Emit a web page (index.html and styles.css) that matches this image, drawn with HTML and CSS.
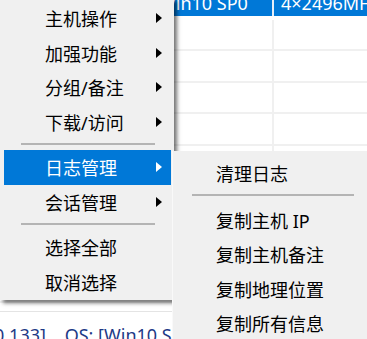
FILE: index.html
```html
<!DOCTYPE html>
<html>

<head>
  <title>Host list - context menu</title>
  <link rel="stylesheet" href="styles.css">
</head>

<body>
  <div class="screen">
    <div class="list">
      <div class="row selected">
        <span class="cell c1"></span>
        <span class="cell c2">Win10 SP0</span>
        <span class="cell c3">4×2496MHz</span>
      </div>
      <div class="rows">
        <div class="row"><span class="cell c1"></span><span class="cell c2"></span><span class="cell c3"></span></div>
        <div class="row"><span class="cell c1"></span><span class="cell c2"></span><span class="cell c3"></span></div>
        <div class="row"><span class="cell c1"></span><span class="cell c2"></span><span class="cell c3"></span></div>
        <div class="row"><span class="cell c1"></span><span class="cell c2"></span><span class="cell c3"></span></div>
        <div class="row"><span class="cell c1"></span><span class="cell c2"></span><span class="cell c3"></span></div>
        <div class="row"><span class="cell c1"></span><span class="cell c2"></span><span class="cell c3"></span></div>
        <div class="row"><span class="cell c1"></span><span class="cell c2"></span><span class="cell c3"></span></div>
        <div class="row"><span class="cell c1"></span><span class="cell c2"></span><span class="cell c3"></span></div>
        <div class="row"><span class="cell c1"></span><span class="cell c2"></span><span class="cell c3"></span></div>
      </div>
    </div>
    <div class="status">
      <span class="status-text">0.133]    OS: [Win10 SP0]    CPU: 4×2496MHz</span>
    </div>

    <div class="menu main-menu">
      <div class="item"><span>主机操作</span><i class="arrow"></i></div>
      <div class="item"><span>加强功能</span><i class="arrow"></i></div>
      <div class="item"><span>分组/备注</span><i class="arrow"></i></div>
      <div class="item"><span>下载/访问</span><i class="arrow"></i></div>
      <div class="sep"></div>
      <div class="item active"><span>日志管理</span><i class="arrow"></i></div>
      <div class="item"><span>会话管理</span><i class="arrow"></i></div>
      <div class="sep"></div>
      <div class="item"><span>选择全部</span></div>
      <div class="item"><span>取消选择</span></div>
    </div>

    <div class="menu sub-menu">
      <div class="item"><span>清理日志</span></div>
      <div class="sep"></div>
      <div class="item"><span>复制主机 IP</span></div>
      <div class="item"><span>复制主机备注</span></div>
      <div class="item"><span>复制地理位置</span></div>
      <div class="item"><span>复制所有信息</span></div>
    </div>
  </div>
</body>

</html>
```

FILE: styles.css
```css
html,
body {
  margin: 0;
  padding: 0;
  background: #fff;
}

.screen {
  position: relative;
  width: 367px;
  height: 339px;
  overflow: hidden;
  font-family: "Noto Sans", "Noto Sans CJK SC", sans-serif;
  font-size: 18px;
  color: #000;
}

/* host list behind the menus */
.list {
  height: 311px;
  overflow: hidden;
}

.row {
  display: flex;
  height: 29.5px;
  border-bottom: 2px solid #f0f0f0;
}

.row.selected {
  height: 16px;
  border-bottom: none;
  background-color: #0078d7;
  color: #fff;
  line-height: 6px;
}

.rows {
  padding-top: 3.5px;
}

.cell {
  display: block;
  white-space: nowrap;
  overflow: hidden;
}

.c1 {
  width: 150px;
}

.c2 {
  width: 124px;
  padding-left: 9px;
  box-sizing: border-box;
  border-right: 2px solid #f0f0f0;
}

.c3 {
  flex: 1;
  padding-left: 7px;
}

.selected .c2 {
  border-right-color: #e6eef8;
}

.status {
  border-top: 1px solid #e4e4e4;
  padding-top: 11px;
  line-height: 24px;
  color: #1e3a86;
}

.status-text {
  display: block;
  margin-left: -6px;
  white-space: pre;
}

/* context menus */
.menu {
  position: absolute;
  box-sizing: border-box;
  background-color: #f0f0f0;
}

.main-menu {
  left: 0;
  top: -2px;
  width: 174px;
  padding: 3px 3px 1px 4px;
  box-shadow: 3px 3px 4px rgba(0, 0, 0, 0.55);
}

.sub-menu {
  left: 172px;
  top: 151px;
  width: 201px;
  padding-top: 5px;
  border-left: 1px solid #f9f9f9;
}

.item {
  display: flex;
  align-items: center;
  height: 34.5px;
  white-space: nowrap;
}

.main-menu .item {
  padding-left: 41px;
  padding-right: 9px;
}

.sub-menu .item {
  padding-left: 43px;
}

.item.active {
  background-color: #0078d7;
  color: #fff;
}

.arrow {
  margin-left: auto;
  width: 0;
  height: 0;
  border-left: 6px solid #000;
  border-top: 5px solid transparent;
  border-bottom: 5px solid transparent;
}

.item.active .arrow {
  border-left-color: #fff;
}

.sep {
  height: 2px;
  background-color: #b4b4b4;
}

.main-menu .sep {
  margin: 4px 16px 5px 17px;
}

.sub-menu .sep {
  margin: 3px 19px 7px 19px;
}
```
